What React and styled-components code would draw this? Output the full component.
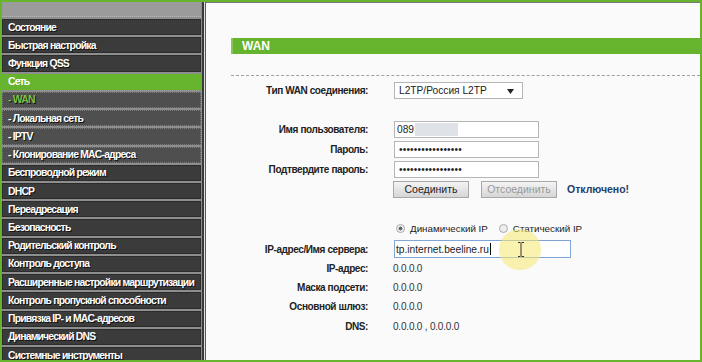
import React from 'react';
import styled, { createGlobalStyle } from 'styled-components';

const GlobalStyle = createGlobalStyle`
    html, body {
        margin: 0;
        padding: 0;
        background: #fafafa;
    }
    body {
        font-family: "Liberation Sans", Arial, sans-serif;
    }
`;

const Frame = styled.div`
    width: 702px;
    height: 362px;
    box-sizing: border-box;
    border: 2px solid #66b32e;
    display: flex;
    overflow: hidden;
    background: #fafafa;
`;

const Sidebar = styled.nav`
    width: 199px;
    flex: none;
    display: flex;
    flex-direction: column;
    background: #8e8e8e;
    padding-right: 1px;
`;

const SideTop = styled.div`
    height: 14px;
    flex: none;
    background: #9b9b9b;
    border-bottom: 1px dotted #b8b8b8;
`;

const Menu = styled.div`
    display: grid;
    grid-template-rows: repeat(19, 18.22px);
`;

const MenuItem = styled.div`
    margin-top: 2px;
    box-sizing: border-box;
    display: flex;
    align-items: center;
    padding-left: 5px;
    background: ${p => (p.$active ? '#66b32e' : p.$sub ? '#4f4f4f' : '#3b3b3b')};
    border: 1px ${p => (p.$sub ? 'dotted #7a7a7a' : 'solid #2c2c2c')};
    border-color: ${p => (p.$active ? '#66b32e' : '')};
    color: ${p => (p.$current ? '#7cc243' : '#fff')};
    font-weight: bold;
    font-size: 10.4px;
    letter-spacing: -0.8px;
    text-shadow: ${p => (p.$active ? 'none' : '1px 1px 0 #111')};
    white-space: nowrap;
    overflow: hidden;
`;

const Divider = styled.div`
    width: 4px;
    flex: none;
    box-sizing: border-box;
    border-left: 2px solid #3a3a3a;
    border-right: 1px solid #5a5a5a;
    background: #dedede;
`;

const Content = styled.main`
    flex: 1;
    box-sizing: border-box;
    padding: 35px 0 0 25px;
    border-top: 1px solid #777;
    background: #fafafa;
    color: #222;
`;

const TitleBar = styled.div`
    height: 16px;
    box-sizing: border-box;
    background: #66b32e;
    border-left: 2px solid #86c558;
    display: flex;
    align-items: center;
    padding-left: 9px;
    color: #fff;
    font-weight: bold;
    font-size: 12px;
`;

const Rule = styled.div`
    margin-top: 21px;
    border-top: 1px dashed #a0a0a0;
`;

const Form = styled.div`
    display: flex;
    flex-direction: column;
    padding-top: 4px;
`;

const Row = styled.div`
    display: flex;
    align-items: center;
    height: ${p => p.$h || 20}px;
    margin-top: ${p => p.$gap || 0}px;
`;

const Label = styled.div`
    width: 137px;
    flex: none;
    text-align: right;
    font-weight: bold;
    font-size: 10px;
    letter-spacing: -0.4px;
    color: #222;
`;

const Field = styled.div`
    margin-left: 25px;
    display: flex;
    align-items: center;
    font-size: 10px;
    letter-spacing: -0.2px;
    color: #333;
`;

const Box = styled.div`
    position: relative;
    width: ${p => p.$w}px;
    height: ${p => p.$h || 17}px;
    box-sizing: border-box;
    margin-left: 1px;
    border: 1px solid ${p => (p.$focus ? '#7ea6d6' : '#b5b5b5')};
    background: #fff;
    display: flex;
    align-items: center;
    padding-left: ${p => p.$pad ?? 3}px;
    font-size: 10.2px;
    letter-spacing: 0;
    color: #222;
`;

const Blurred = styled.span`
    display: inline-block;
    width: 43px;
    height: 13px;
    margin-left: 1px;
    background: #dfe2e6;
`;

const Dots = styled.span`
    font-size: 10px;
    letter-spacing: 0.2px;
    color: #222;
`;

const Arrow = styled.svg`
    position: absolute;
    right: 8px;
    top: 6px;
`;

const Button = styled.button`
    width: 76px;
    height: 17px;
    box-sizing: border-box;
    padding: 0;
    border: 1px solid #a8a8a8;
    background: linear-gradient(#f4f4f4, #d6d6d6);
    font-family: "Liberation Sans", Arial, sans-serif;
    font-size: 10.5px;
    color: ${p => (p.disabled ? '#9a9a9a' : '#222')};
    margin-right: ${p => p.$mr || 0}px;
`;

const Status = styled.span`
    margin-left: 10px;
    font-weight: bold;
    font-size: 10.5px;
    letter-spacing: 0;
    color: #1d3f6e;
`;

const Radio = styled.span`
    width: 9px;
    height: 9px;
    box-sizing: border-box;
    border-radius: 50%;
    border: 1px solid #a9a9a9;
    background: radial-gradient(circle, ${p => (p.$on ? '#666 0 1.8px, #eee 2.2px' : '#eee 0')});
    margin: ${p => (p.$first ? '0 5px 0 3px' : '0 5px 0 11px')};
`;

const RadioText = styled.span`
    font-size: 9.8px;
    letter-spacing: 0;
    color: #222;
`;

const Caret = styled.span`
    display: inline-block;
    width: 1px;
    height: 12px;
    background: #000;
    margin-left: 1px;
`;

const Highlight = styled.div`
    position: absolute;
    left: 499px;
    top: 229px;
    width: 42px;
    height: 41px;
    border-radius: 50%;
    background: rgba(246, 232, 110, 0.55);
    pointer-events: none;
`;

const Cursor = styled.svg`
    position: absolute;
    left: 517px;
    top: 242px;
`;

const Page = styled.div`
    position: relative;
`;

const menu = [
    { t: 'Состояние' },
    { t: 'Быстрая настройка' },
    { t: 'Функция QSS' },
    { t: 'Сеть', active: true },
    { t: '- WAN', sub: true, current: true },
    { t: '- Локальная сеть', sub: true },
    { t: '- IPTV', sub: true },
    { t: '- Клонирование MAC-адреса', sub: true },
    { t: 'Беспроводной режим' },
    { t: 'DHCP' },
    { t: 'Переадресация' },
    { t: 'Безопасность' },
    { t: 'Родительский контроль' },
    { t: 'Контроль доступа' },
    { t: 'Расширенные настройки маршрутизации' },
    { t: 'Контроль пропускной способности' },
    { t: 'Привязка IP- и MAC-адресов' },
    { t: 'Динамический DNS' },
    { t: 'Системные инструменты' },
];

const info = [
    ['IP-адрес:', '0.0.0.0', 18],
    ['Маска подсети:', '0.0.0.0', 20],
    ['Основной шлюз:', '0.0.0.0', 19],
    ['DNS:', '0.0.0.0 , 0.0.0.0', 20],
];

const App = () => (
    <Page>
        <GlobalStyle />
        <Frame>
            <Sidebar>
                <SideTop />
                <Menu>
                    {menu.map(m => (
                        <MenuItem key={m.t} $sub={m.sub} $active={m.active} $current={m.current}>
                            {m.t}
                        </MenuItem>
                    ))}
                </Menu>
            </Sidebar>
            <Divider />
            <Content>
                <TitleBar>WAN</TitleBar>
                <Rule />
                <Form>
                    <Row>
                        <Label>Тип WAN соединения:</Label>
                        <Field>
                            <Box $w={129} $pad={4}>
                                L2TP/Россия L2TP
                                <Arrow width="7" height="5" viewBox="0 0 7 5">
                                    <path d="M0 0h7L3.5 5z" fill="#222" />
                                </Arrow>
                            </Box>
                        </Field>
                    </Row>
                    <Row $gap={19}>
                        <Label>Имя пользователя:</Label>
                        <Field>
                            <Box $w={145} $pad={2}>
                                089<Blurred />
                            </Box>
                        </Field>
                    </Row>
                    <Row>
                        <Label>Пароль:</Label>
                        <Field>
                            <Box $w={145} $pad={4}><Dots>•••••••••••••••••</Dots></Box>
                        </Field>
                    </Row>
                    <Row>
                        <Label>Подтвердите пароль:</Label>
                        <Field>
                            <Box $w={145} $pad={4}><Dots>•••••••••••••••••</Dots></Box>
                        </Field>
                    </Row>
                    <Row>
                        <Label />
                        <Field>
                            <Button $mr={12}>Соединить</Button>
                            <Button disabled>Отсоединить</Button>
                            <Status>Отключено!</Status>
                        </Field>
                    </Row>
                    <Row $gap={18} $h={22}>
                        <Label />
                        <Field>
                            <Radio $on $first />
                            <RadioText>Динамический IP</RadioText>
                            <Radio />
                            <RadioText>Статический IP</RadioText>
                        </Field>
                    </Row>
                    <Row>
                        <Label>IP-адрес/Имя сервера:</Label>
                        <Field>
                            <Box $w={177} $h={18} $pad={1} $focus>
                                tp.internet.beeline.ru<Caret />
                            </Box>
                        </Field>
                    </Row>
                    {info.map(([l, v, h]) => (
                        <Row key={l} $h={h}>
                            <Label>{l}</Label>
                            <Field>{v}</Field>
                        </Row>
                    ))}
                </Form>
            </Content>
        </Frame>
        <Highlight />
        <Cursor width="8" height="15" viewBox="0 0 8 15">
            <path d="M1 0.5h2.5M4.5 0.5h2.5M4 1v13M1 14.5h2.5M4.5 14.5h2.5" stroke="#333" strokeWidth="1" fill="none" />
        </Cursor>
    </Page>
);

export default App;
